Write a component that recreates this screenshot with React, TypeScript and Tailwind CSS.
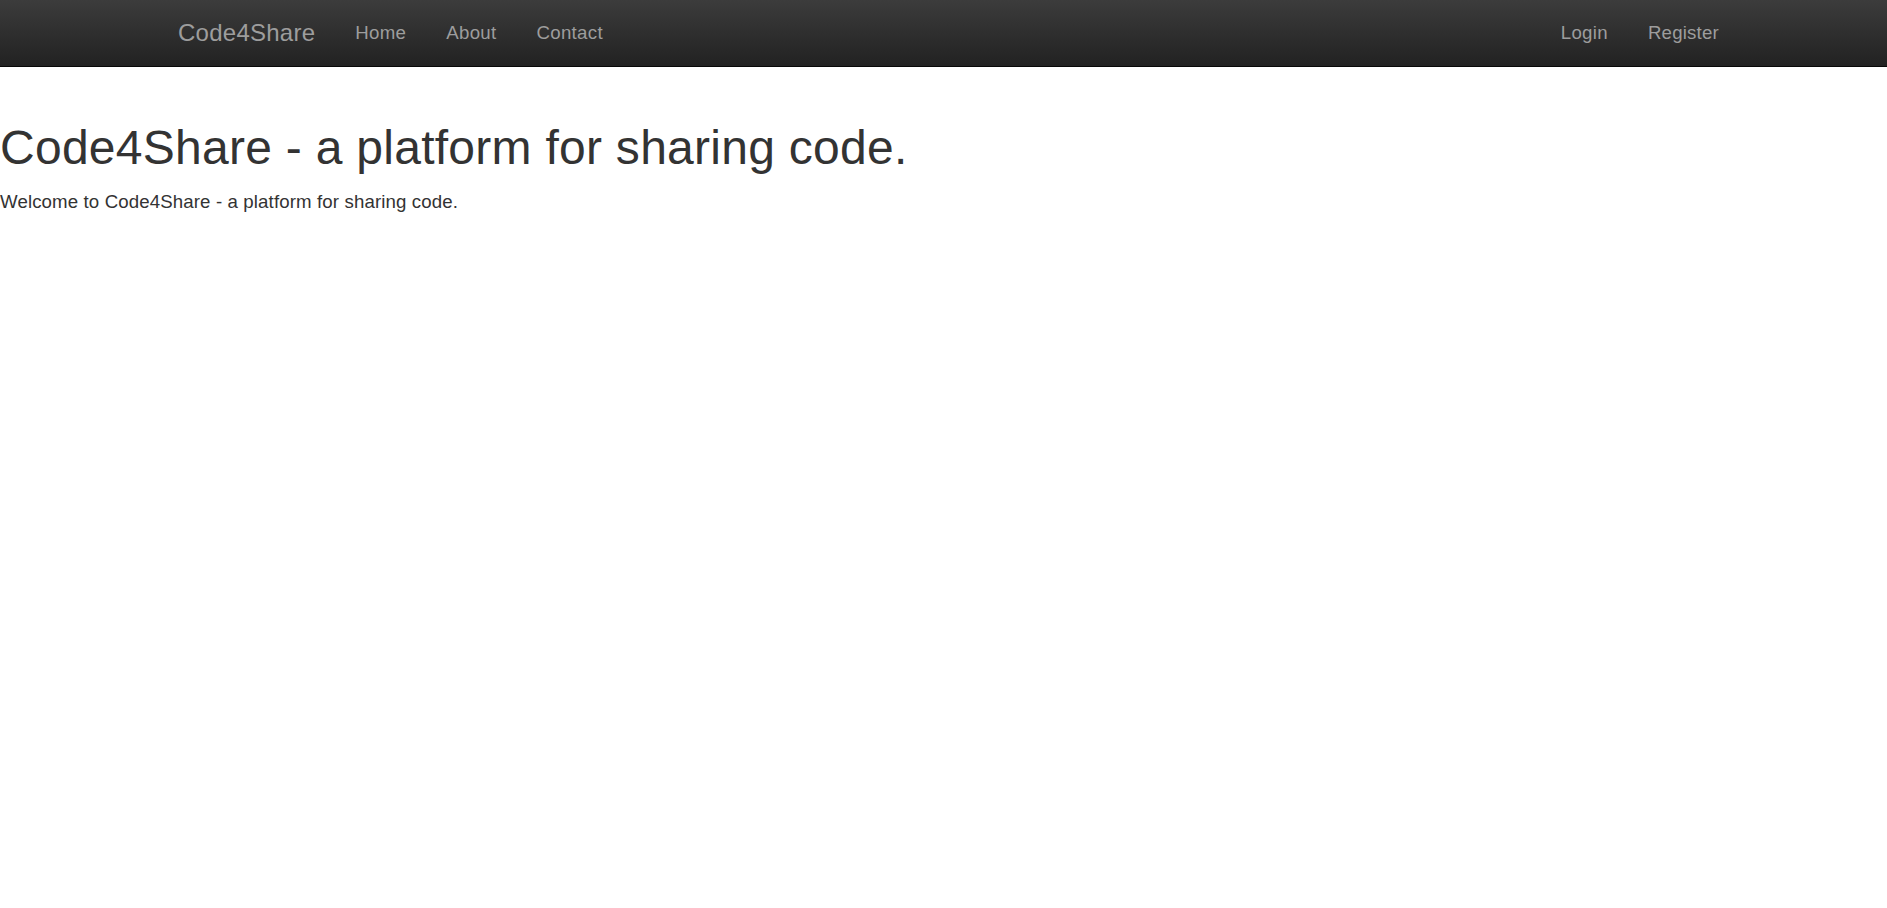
export default function App() {
  const link = "block px-[20px] pt-[20px] pb-[20px] text-[18.67px] leading-[26.67px] tracking-[0.3px] text-[#9d9d9d] hover:text-white";
  return (
    <div className="min-h-screen bg-white text-[#333] font-['Liberation_Sans',Arial,sans-serif]">
      <nav className="h-[67px] border-b border-[#080808] bg-gradient-to-b from-[#3c3c3c] to-[#222222]">
        <div className="flex h-[66px] pl-[158px] pr-[148px]">
          <a className="block px-[20px] pt-[20px] text-[24px] leading-[26.67px] tracking-[0.25px] text-[#9d9d9d]">Code4Share</a>
          <ul className="flex">
            <li><a className={link}>Home</a></li>
            <li><a className={link}>About</a></li>
            <li><a className={link}>Contact</a></li>
          </ul>
          <ul className="ml-auto flex">
            <li><a className={link}>Login</a></li>
            <li><a className="block pl-[20px] pr-[20px] pt-[20px] pb-[20px] text-[18.67px] leading-[26.67px] tracking-[0.2px] text-[#9d9d9d] hover:text-white">Register</a></li>
          </ul>
        </div>
      </nav>
      <div className="pt-[54.5px]">
        <h1 className="mb-[14.5px] text-[48px] leading-[1.1] font-normal tracking-[0.27px]">Code4Share - a platform for sharing code.</h1>
        <p className="text-[18.67px] leading-[26.67px] tracking-[0.12px]">Welcome to Code4Share - a platform for sharing code.</p>
      </div>
    </div>
  );
}
